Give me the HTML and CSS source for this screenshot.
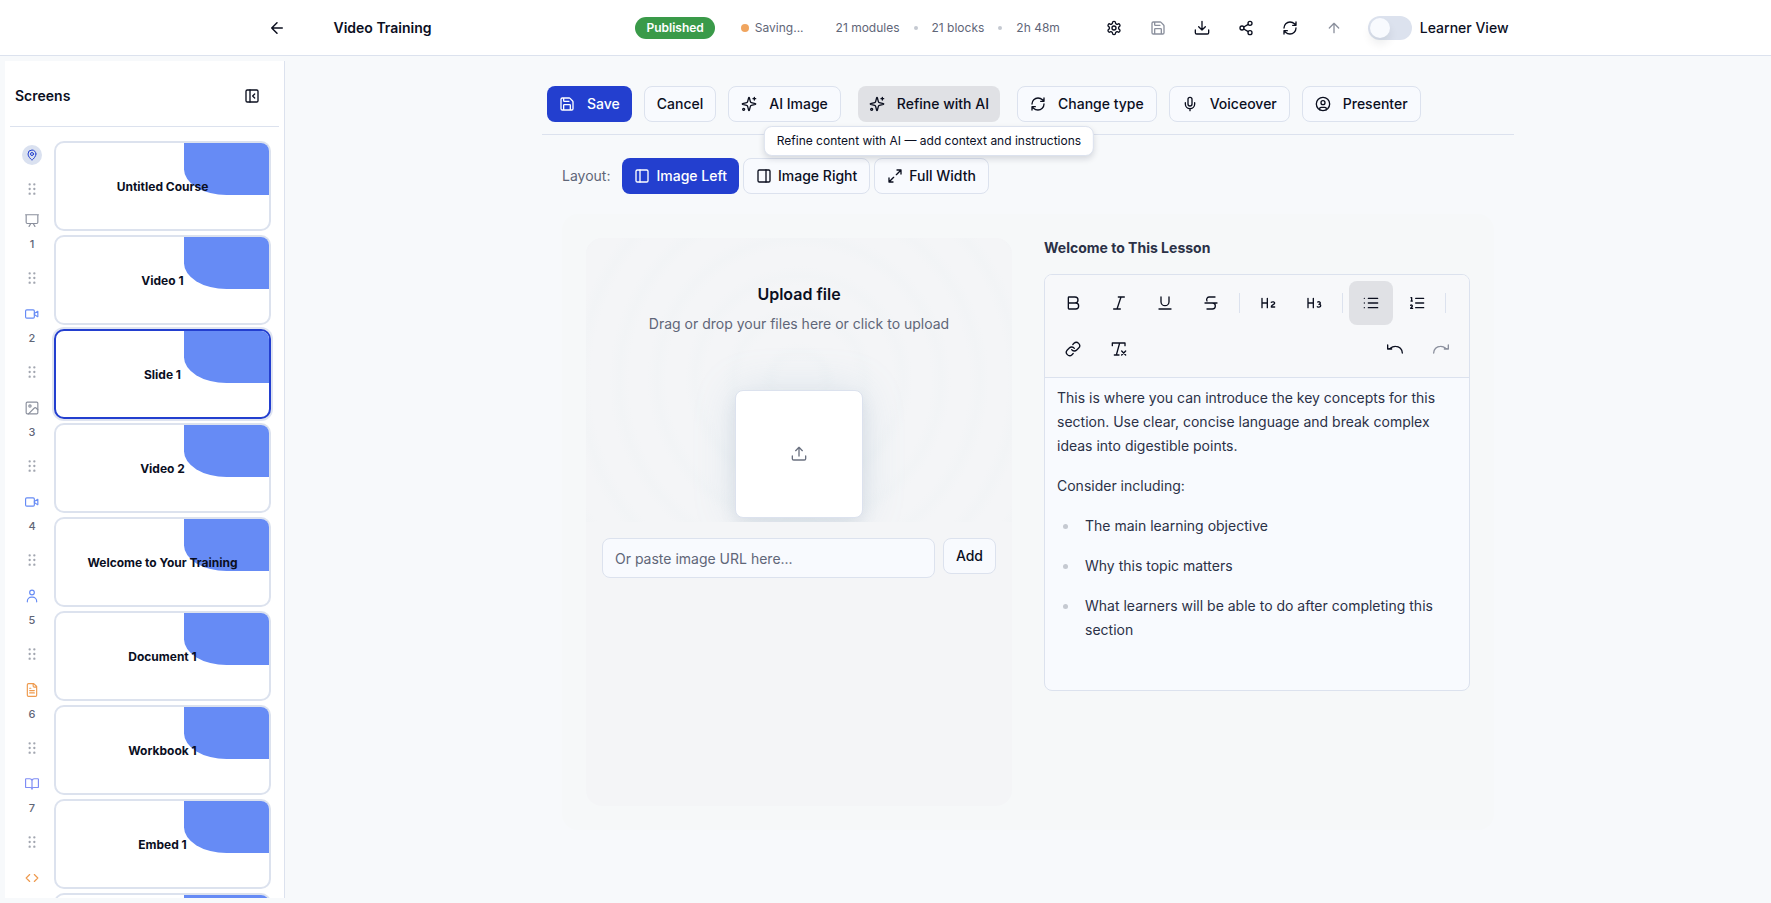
FILE: index.html
```html
<!DOCTYPE html>
<html lang="en">
<head>
<meta charset="utf-8">
<meta name="viewport" content="width=device-width, initial-scale=1">
<title>Video Training</title>
<link rel="stylesheet" href="styles.css">
</head>
<body>
<svg class="sprite" aria-hidden="true">
  <symbol id="i-back" viewBox="0 0 24 24"><path d="m12 19-7-7 7-7M19 12H5"/></symbol>
  <symbol id="i-gear" viewBox="0 0 24 24"><path d="M12.22 2h-.44a2 2 0 0 0-2 2v.18a2 2 0 0 1-1 1.73l-.43.25a2 2 0 0 1-2 0l-.15-.08a2 2 0 0 0-2.73.73l-.22.38a2 2 0 0 0 .73 2.73l.15.1a2 2 0 0 1 1 1.72v.51a2 2 0 0 1-1 1.74l-.15.09a2 2 0 0 0-.73 2.73l.22.38a2 2 0 0 0 2.73.73l.15-.08a2 2 0 0 1 2 0l.43.25a2 2 0 0 1 1 1.73V20a2 2 0 0 0 2 2h.44a2 2 0 0 0 2-2v-.18a2 2 0 0 1 1-1.73l.43-.25a2 2 0 0 1 2 0l.15.08a2 2 0 0 0 2.73-.73l.22-.39a2 2 0 0 0-.73-2.73l-.15-.08a2 2 0 0 1-1-1.74v-.5a2 2 0 0 1 1-1.74l.15-.09a2 2 0 0 0 .73-2.73l-.22-.38a2 2 0 0 0-2.73-.73l-.15.08a2 2 0 0 1-2 0l-.43-.25a2 2 0 0 1-1-1.73V4a2 2 0 0 0-2-2z"/><circle cx="12" cy="12" r="3"/></symbol>
  <symbol id="i-save" viewBox="0 0 24 24"><path d="M15.2 3a2 2 0 0 1 1.4.6l3.8 3.8a2 2 0 0 1 .6 1.4V19a2 2 0 0 1-2 2H5a2 2 0 0 1-2-2V5a2 2 0 0 1 2-2zM17 21v-7a1 1 0 0 0-1-1H8a1 1 0 0 0-1 1v7M7 3v4a1 1 0 0 0 1 1h7"/></symbol>
  <symbol id="i-download" viewBox="0 0 24 24"><path d="M22 15v4a2 2 0 0 1-2 2H4a2 2 0 0 1-2-2v-4M7 10l5 5 5-5M12 15V2"/></symbol>
  <symbol id="i-upload" viewBox="0 0 24 24"><path d="M22 15v4a2 2 0 0 1-2 2H4a2 2 0 0 1-2-2v-4M17 7l-5-5-5 5M12 2v13"/></symbol>
  <symbol id="i-share" viewBox="0 0 24 24"><circle cx="18" cy="5" r="3"/><circle cx="6" cy="12" r="3"/><circle cx="18" cy="19" r="3"/><path d="m8.59 13.51 6.83 3.98M15.41 6.51l-6.82 3.98"/></symbol>
  <symbol id="i-refresh" viewBox="0 0 24 24"><path d="M3 12a9 9 0 0 1 9-9 9.75 9.75 0 0 1 6.74 2.74L21 8M21 3v5h-5M21 12a9 9 0 0 1-9 9 9.75 9.75 0 0 1-6.74-2.74L3 16M8 16H3v5"/></symbol>
  <symbol id="i-up" viewBox="0 0 24 24"><path d="m5 12 7-7 7 7M12 19V5"/></symbol>
  <symbol id="i-collapse" viewBox="0 0 24 24"><rect x="3" y="3" width="18" height="18" rx="2"/><path d="M9 3v18M16 15l-3-3 3-3"/></symbol>
  <symbol id="i-left" viewBox="0 0 24 24"><rect x="3" y="3" width="18" height="18" rx="2"/><path d="M9 3v18"/></symbol>
  <symbol id="i-right" viewBox="0 0 24 24"><rect x="3" y="3" width="18" height="18" rx="2"/><path d="M15 3v18"/></symbol>
  <symbol id="i-expand" viewBox="0 0 24 24"><path d="M15 3h6v6M21 3l-7 7M3 21l7-7M9 21H3v-6"/></symbol>
  <symbol id="i-sparkle" viewBox="0 0 24 24"><path d="M9.94 15.5A2 2 0 0 0 8.5 14.06l-6.14-1.58a.5.5 0 0 1 0-.96L8.5 9.94A2 2 0 0 0 9.94 8.5l1.58-6.14a.5.5 0 0 1 .96 0l1.58 6.14a2 2 0 0 0 1.44 1.44l6.14 1.58a.5.5 0 0 1 0 .96l-6.14 1.58a2 2 0 0 0-1.44 1.44l-1.58 6.14a.5.5 0 0 1-.96 0zM20 2v4M22 4h-4"/><circle cx="4" cy="20" r="1.5"/></symbol>
  <symbol id="i-mic" viewBox="0 0 24 24"><path d="M12 19v3M19 10v2a7 7 0 0 1-14 0v-2"/><rect x="9" y="2" width="6" height="13" rx="3"/></symbol>
  <symbol id="i-person" viewBox="0 0 24 24"><circle cx="12" cy="12" r="10"/><circle cx="12" cy="10" r="3"/><path d="M7 20.66V19a2 2 0 0 1 2-2h6a2 2 0 0 1 2 2v1.66"/></symbol>
  <symbol id="i-pin" viewBox="0 0 24 24"><path d="M20 10c0 5-5.54 10.19-7.4 11.8a1 1 0 0 1-1.2 0C9.54 20.19 4 15 4 10a8 8 0 0 1 16 0"/><circle cx="12" cy="10" r="3"/></symbol>
  <symbol id="i-grip" viewBox="0 0 24 24"><circle cx="8" cy="4" r="1"/><circle cx="8" cy="12" r="1"/><circle cx="8" cy="20" r="1"/><circle cx="16" cy="4" r="1"/><circle cx="16" cy="12" r="1"/><circle cx="16" cy="20" r="1"/></symbol>
  <symbol id="i-board" viewBox="0 0 24 24"><path d="M1 3h22M2 3v13a2 2 0 0 0 2 2h16a2 2 0 0 0 2-2V3M7 23l3-5M17 23l-3-5"/></symbol>
  <symbol id="i-video" viewBox="0 0 24 24"><rect x="1" y="5" width="15" height="14" rx="2"/><path d="m16 11 5.200-3.500a.5.500 0 0 1 .8.400v8.200a.5.500 0 0 1-.8.400L16 13"/></symbol>
  <symbol id="i-image" viewBox="0 0 24 24"><rect x="2" y="2" width="20" height="20" rx="2"/><circle cx="8.500" cy="8.500" r="2"/><path d="m22 15-3-3a2 2 0 0 0-3 0l-10 10"/></symbol>
  <symbol id="i-user" viewBox="0 0 24 24"><path d="M20 22v-1a7 7 0 0 0-7-7h-2a7 7 0 0 0-7 7v1"/><circle cx="12" cy="6" r="4"/></symbol>
  <symbol id="i-doc" viewBox="0 0 24 24"><path d="M15 1H6a2 2 0 0 0-2 2v18a2 2 0 0 0 2 2h12a2 2 0 0 0 2-2V6zM14 1v4a2 2 0 0 0 2 2h4M10 9H8M16 13H8M16 17H8"/></symbol>
  <symbol id="i-book" viewBox="0 0 24 24"><path d="M12 7v14M2 18a1 1 0 0 1-1-1V4a1 1 0 0 1 1-1h6a4 4 0 0 1 4 4 4 4 0 0 1 4-4h6a1 1 0 0 1 1 1v13a1 1 0 0 1-1 1h-7a3 3 0 0 0-3 3 3 3 0 0 0-3-3z"/></symbol>
  <symbol id="i-code" viewBox="0 0 24 24"><path d="m16 18 6-6-6-6M8 6l-6 6 6 6"/></symbol>
  <symbol id="i-bold" viewBox="0 0 24 24"><path d="M5 12h11a4 4 0 0 1 0 9H6a1 1 0 0 1-1-1V4a1 1 0 0 1 1-1h9a4 4 0 0 1 0 9"/></symbol>
  <symbol id="i-italic" viewBox="0 0 24 24"><path d="M20 3h-9M14 21H4M15 3 9 21"/></symbol>
  <symbol id="i-underline" viewBox="0 0 24 24"><path d="M6 3v7a6 6 0 0 0 12 0V3M3 21h18"/></symbol>
  <symbol id="i-strike" viewBox="0 0 24 24"><path d="M18 3H9a4 4 0 0 0-3 6M14 12a4 4 0 0 1 0 9H6M3 12h18"/></symbol>
  <symbol id="i-h2" viewBox="0 0 24 24"><path d="M3 12h8M3 19V5M11 19V5M22 18h-5c0-4 5-3 5-6 0-1.500-3-2.500-5-1"/></symbol>
  <symbol id="i-h3" viewBox="0 0 24 24"><path d="M3 12h8M3 19V5M11 19V5M17.500 10.500c1.700-1 4 0 4 1.500a2 2 0 0 1-2 2M17 17.500c2 1.500 5 .3 5-1.500a2 2 0 0 0-2.500-2"/></symbol>
  <symbol id="i-list" viewBox="0 0 24 24"><path d="M2 5h.01M2 12h.01M2 19h.01M8 5h14M8 12h14M8 19h14"/></symbol>
  <symbol id="i-ordered" viewBox="0 0 24 24"><path d="M10 5h12M10 12h12M10 19h12M3 4h1v5M3 9h2M5.500 20H2.400c0-1 2.600-1.925 2.600-3.500a1.500 1.500 0 0 0-2.600-1.020"/></symbol>
  <symbol id="i-link" viewBox="0 0 24 24"><path d="M10 13a5 5 0 0 0 7.540.540l3-3a5 5 0 0 0-7.070-7.070l-1.720 1.710M14 11a5 5 0 0 0-7.540-.540l-3 3a5 5 0 0 0 7.070 7.070l1.710-1.710"/></symbol>
  <symbol id="i-clear" viewBox="0 0 24 24"><path d="M2 7V3h19v4M5 21h7M13 3 8 21M16 15l6 6M22 15l-6 6"/></symbol>
  <symbol id="i-undo" viewBox="0 0 24 24"><path d="M1 6v6h6M23 18a10 10 0 0 0-10-10 11 11 0 0 0-8 3l-3 1"/></symbol>
  <symbol id="i-redo" viewBox="0 0 24 24"><path d="M23 6v6h-6M1 18A10 10 0 0 1 11 8a11 11 0 0 1 8 3l3 1"/></symbol>
</svg>

<header class="topbar">
  <div class="topbar-inner">
    <button class="icon-btn back" aria-label="Back"><svg class="icon icon-lg"><use href="#i-back"/></svg></button>
    <h1 class="course-title">Video Training</h1>
    <span class="badge">Published</span>
    <span class="saving">Saving...</span>
    <div class="stats"><span>21 modules</span><span class="dot"></span><span>21 blocks</span><span class="dot"></span><span>2h 48m</span></div>
    <nav class="actions" aria-label="Course actions">
      <button class="icon-btn" aria-label="Settings"><svg class="icon"><use href="#i-gear"/></svg></button>
      <button class="icon-btn" aria-label="Save" disabled><svg class="icon"><use href="#i-save"/></svg></button>
      <button class="icon-btn" aria-label="Download"><svg class="icon"><use href="#i-download"/></svg></button>
      <button class="icon-btn" aria-label="Share"><svg class="icon"><use href="#i-share"/></svg></button>
      <button class="icon-btn" aria-label="Refresh"><svg class="icon"><use href="#i-refresh"/></svg></button>
      <button class="icon-btn" aria-label="Scroll to top" disabled><svg class="icon"><use href="#i-up"/></svg></button>
    </nav>
    <label class="learner"><input class="switch" type="checkbox" role="switch">Learner View</label>
  </div>
</header>

<div class="workspace">
  <aside class="sidebar">
    <div class="sidebar-head">
      <h2 class="sidebar-title">Screens</h2>
      <button class="icon-btn" aria-label="Collapse sidebar"><svg class="icon"><use href="#i-collapse"/></svg></button>
    </div>
    <ol class="screens">
      <li class="screen"><div class="rail"><span class="pin"><svg class="icon icon-xs"><use href="#i-pin"/></svg></span><svg class="icon icon-sm grip"><use href="#i-grip"/></svg><svg class="icon icon-sm"><use href="#i-board"/></svg></div><button class="thumb">Untitled Course</button></li>
      <li class="screen"><div class="rail"><span class="num">1</span><svg class="icon icon-sm grip"><use href="#i-grip"/></svg><svg class="icon icon-sm blue"><use href="#i-video"/></svg></div><button class="thumb">Video 1</button></li>
      <li class="screen"><div class="rail"><span class="num">2</span><svg class="icon icon-sm grip"><use href="#i-grip"/></svg><svg class="icon icon-sm"><use href="#i-image"/></svg></div><button class="thumb selected" aria-current="true">Slide 1</button></li>
      <li class="screen"><div class="rail"><span class="num">3</span><svg class="icon icon-sm grip"><use href="#i-grip"/></svg><svg class="icon icon-sm blue"><use href="#i-video"/></svg></div><button class="thumb">Video 2</button></li>
      <li class="screen"><div class="rail"><span class="num">4</span><svg class="icon icon-sm grip"><use href="#i-grip"/></svg><svg class="icon icon-sm blue"><use href="#i-user"/></svg></div><button class="thumb">Welcome to Your Training</button></li>
      <li class="screen"><div class="rail"><span class="num">5</span><svg class="icon icon-sm grip"><use href="#i-grip"/></svg><svg class="icon icon-sm orange"><use href="#i-doc"/></svg></div><button class="thumb">Document 1</button></li>
      <li class="screen"><div class="rail"><span class="num">6</span><svg class="icon icon-sm grip"><use href="#i-grip"/></svg><svg class="icon icon-sm violet"><use href="#i-book"/></svg></div><button class="thumb">Workbook 1</button></li>
      <li class="screen"><div class="rail"><span class="num">7</span><svg class="icon icon-sm grip"><use href="#i-grip"/></svg><svg class="icon icon-sm orange"><use href="#i-code"/></svg></div><button class="thumb">Embed 1</button></li>
      <li class="screen"><div class="rail"></div><button class="thumb" aria-label="Next screen"></button></li>
    </ol>
  </aside>

  <main class="main">
    <div class="editor">
      <div class="toolbar">
        <button class="btn primary wide"><svg class="icon"><use href="#i-save"/></svg>Save</button>
        <button class="btn wide">Cancel</button>
        <button class="btn wide"><svg class="icon"><use href="#i-sparkle"/></svg>AI Image</button>
        <div class="tip-anchor">
          <button class="btn wide hovered" aria-describedby="refine-tip"><svg class="icon"><use href="#i-sparkle"/></svg>Refine with AI</button>
          <div class="tooltip" role="tooltip" id="refine-tip">Refine content with AI — add context and instructions</div>
        </div>
        <button class="btn wide"><svg class="icon"><use href="#i-refresh"/></svg>Change type</button>
        <button class="btn wide"><svg class="icon"><use href="#i-mic"/></svg>Voiceover</button>
        <button class="btn wide"><svg class="icon"><use href="#i-person"/></svg>Presenter</button>
      </div>

      <div class="body">
        <div class="layout-row">
          <span class="layout-label">Layout:</span>
          <button class="btn primary" aria-pressed="true"><svg class="icon"><use href="#i-left"/></svg>Image Left</button>
          <button class="btn"><svg class="icon"><use href="#i-right"/></svg>Image Right</button>
          <button class="btn"><svg class="icon"><use href="#i-expand"/></svg>Full Width</button>
        </div>

        <div class="slide">
          <section class="media">
            <div class="drop">
              <h3 class="drop-title">Upload file</h3>
              <p class="drop-text">Drag or drop your files here or click to upload</p>
              <button class="drop-box" aria-label="Upload file"><svg class="icon"><use href="#i-upload"/></svg></button>
            </div>
            <form class="url-row">
              <input class="url-input" type="text" aria-label="Image URL" placeholder="Or paste image URL here...">
              <button class="btn wide" type="button">Add</button>
            </form>
          </section>

          <section class="copy">
            <h3 class="copy-title">Welcome to This Lesson</h3>
            <div class="rich">
              <div class="rich-bar" role="toolbar" aria-label="Formatting">
                <button class="tool" aria-label="Bold"><svg class="icon"><use href="#i-bold"/></svg></button>
                <button class="tool" aria-label="Italic"><svg class="icon"><use href="#i-italic"/></svg></button>
                <button class="tool" aria-label="Underline"><svg class="icon"><use href="#i-underline"/></svg></button>
                <button class="tool" aria-label="Strikethrough"><svg class="icon"><use href="#i-strike"/></svg></button>
                <span class="sep"></span>
                <button class="tool" aria-label="Heading 2"><svg class="icon"><use href="#i-h2"/></svg></button>
                <button class="tool" aria-label="Heading 3"><svg class="icon"><use href="#i-h3"/></svg></button>
                <span class="sep"></span>
                <button class="tool active" aria-label="Bulleted list" aria-pressed="true"><svg class="icon"><use href="#i-list"/></svg></button>
                <button class="tool" aria-label="Numbered list"><svg class="icon"><use href="#i-ordered"/></svg></button>
                <span class="sep"></span>
                <button class="tool" aria-label="Link"><svg class="icon"><use href="#i-link"/></svg></button>
                <button class="tool" aria-label="Clear formatting"><svg class="icon"><use href="#i-clear"/></svg></button>
                <span class="spacer"></span>
                <button class="tool" aria-label="Undo"><svg class="icon"><use href="#i-undo"/></svg></button>
                <button class="tool" aria-label="Redo" disabled><svg class="icon"><use href="#i-redo"/></svg></button>
              </div>
              <div class="rich-text" contenteditable="true" role="textbox" aria-multiline="true" aria-label="Slide text">
                <p>This is where you can introduce the key concepts for this section. Use clear, concise language and break complex ideas into digestible points.</p>
                <p>Consider including:</p>
                <ul>
                  <li>The main learning objective</li>
                  <li>Why this topic matters</li>
                  <li>What learners will be able to do after completing this section</li>
                </ul>
              </div>
            </div>
          </section>
        </div>
      </div>
    </div>
  </main>
</div>
</body>
</html>
```
FILE: styles.css
```css
:root {
  --ink: #0b0f1f;
  --body: #2b3147;
  --muted: #5f6678;
  --line: #dce2ee;
  --page: #f7f9fb;
  --field: #f8fafe;
  --primary: #233fcf;
  --blob: #668bf5;
}

* { box-sizing: border-box; }

body {
  margin: 0;
  height: 100vh;
  display: flex;
  flex-direction: column;
  overflow: hidden;
  background: var(--page);
  color: var(--ink);
  font-family: Inter, "Liberation Sans", sans-serif;
  font-size: 14px;
  line-height: 20px;
}

h1, h2, h3, p, ul, ol { margin: 0; padding: 0; }

button, input { font: inherit; color: inherit; }

.sprite { display: none; }

.icon {
  width: 16px;
  height: 16px;
  flex: none;
  fill: none;
  stroke: currentColor;
  stroke-width: 2;
  stroke-linecap: round;
  stroke-linejoin: round;
}
.icon-lg { width: 18px; height: 18px; }
.icon-sm { width: 14px; height: 14px; }
.icon-xs { width: 12px; height: 12px; }

.icon-btn {
  width: 32px;
  height: 32px;
  padding: 0;
  display: grid;
  place-items: center;
  border: 0;
  background: none;
}
.icon-btn:disabled, .tool:disabled { color: #8b909d; }

/* Top bar */
.topbar {
  flex: none;
  background: #fff;
  border-bottom: 1px solid var(--line);
}
.topbar-inner {
  max-width: 1280px;
  height: 55px;
  margin: 0 auto;
  padding: 0 17px 0 15px;
  display: flex;
  align-items: center;
}
.course-title {
  flex: 1;
  margin-left: 41px;
  font-size: 14px;
  font-weight: 600;
}
.badge {
  padding: 0 11px;
  border-radius: 11px;
  background: #3a9a49;
  color: #fff;
  font-size: 12px;
  font-weight: 600;
  line-height: 22px;
}
.saving {
  margin-left: 26px;
  display: flex;
  align-items: center;
  gap: 6px;
  color: var(--muted);
  font-size: 12px;
}
.saving::before {
  content: "";
  width: 8px;
  height: 8px;
  border-radius: 50%;
  background: #f0a55f;
}
.stats {
  margin: 0 38px 0 32px;
  display: flex;
  align-items: center;
  gap: 14px;
  color: var(--muted);
  font-size: 12px;
}
.dot {
  width: 4px;
  height: 4px;
  border-radius: 50%;
  background: #c5c9d1;
}
.actions { display: flex; gap: 12px; }
.learner {
  margin-left: 18px;
  display: flex;
  align-items: center;
  gap: 8px;
  font-weight: 500;
}
.switch {
  appearance: none;
  width: 44px;
  height: 24px;
  margin: 0;
  padding: 2px;
  border-radius: 12px;
  background: var(--line);
}
.switch::before {
  content: "";
  display: block;
  width: 20px;
  height: 20px;
  border-radius: 50%;
  background: var(--field);
  box-shadow: 0 6px 10px rgba(15, 23, 42, 0.08);
}
.switch:checked::before { margin-left: auto; }

/* Sidebar */
.workspace {
  flex: 1;
  min-height: 0;
  display: flex;
}
.sidebar {
  flex: none;
  width: 280px;
  margin: 5px 0 5px 5px;
  padding: 5px 5px 0;
  display: flex;
  flex-direction: column;
  background: #fff;
  border-right: 1px solid var(--line);
}
.sidebar-head {
  flex: none;
  padding: 14px 11px 14px 5px;
  display: flex;
  align-items: center;
  justify-content: space-between;
  border-bottom: 1px solid var(--line);
}
.sidebar-title { font-size: 14px; font-weight: 600; }
.screens {
  flex: 1;
  min-height: 0;
  padding: 14px 8px 0 0;
  overflow: auto;
  scrollbar-width: none;
  list-style: none;
}
.screen {
  height: 90px;
  margin-bottom: 4px;
  display: flex;
}
.rail {
  flex: none;
  width: 44px;
  padding: 4px 0;
  display: flex;
  flex-direction: column;
  align-items: center;
  justify-content: space-between;
  color: #8b909d;
}
.num {
  color: var(--muted);
  font-size: 11px;
  font-weight: 500;
  line-height: 10px;
}
.pin {
  width: 20px;
  height: 20px;
  display: grid;
  place-items: center;
  border-radius: 50%;
  background: #dae1f0;
  color: var(--primary);
}
.grip { color: #a2a6b0; }
.blue { color: #668bf5; }
.violet { color: #7f8df5; }
.orange { color: #ee9a4e; }
.thumb {
  position: relative;
  isolation: isolate;
  flex: 1;
  min-width: 0;
  padding: 2px 0 0;
  border: 2px solid var(--line);
  border-radius: 10px;
  background: #fff;
  overflow: hidden;
  font-size: 12px;
  font-weight: 700;
}
.thumb::before {
  content: "";
  position: absolute;
  z-index: -1;
  top: 0;
  right: 0;
  width: 40%;
  height: 60%;
  border-bottom-left-radius: 50%;
  background: var(--blob);
}
.thumb.selected {
  border-color: var(--primary);
  box-shadow: 0 0 0 2px #dfe4f1;
}

/* Editor */
.main {
  flex: 1;
  min-width: 0;
  padding: 30px 20px 0;
  overflow: auto;
}
.editor { max-width: 972px; margin: 0 auto; }
.toolbar {
  padding: 0 5px 12px;
  display: flex;
  align-items: center;
  gap: 12px;
  border-bottom: 1px solid var(--line);
}
.btn {
  height: 36px;
  padding: 0 12px;
  display: inline-flex;
  align-items: center;
  gap: 6px;
  border: 1px solid var(--line);
  border-radius: 8px;
  background: var(--field);
  font-weight: 500;
  white-space: nowrap;
}
.btn.wide { gap: 12px; }
.btn.primary {
  border: 0;
  background: var(--primary);
  color: #fff;
}
.btn.hovered {
  padding: 0 11px;
  border: 0;
  background: #e0e1e5;
}
.tip-anchor { position: relative; margin: 0 5px; }
.tooltip {
  position: absolute;
  z-index: 2;
  top: 40px;
  left: 50%;
  transform: translateX(-50%);
  padding: 4px 12px;
  border: 1px solid var(--line);
  border-radius: 8px;
  background: #fff;
  box-shadow: 0 3px 6px rgba(15, 23, 42, 0.14);
  font-size: 12px;
  white-space: nowrap;
}

.body { padding: 23px 20px; }
.layout-row {
  margin-bottom: 20px;
  display: flex;
  align-items: center;
  gap: 4px;
}
.layout-label { margin-right: 8px; color: var(--muted); }

.slide {
  padding: 24px;
  display: grid;
  grid-template-columns: 1fr 1fr;
  gap: 32px;
  border-radius: 16px;
  background: #f6f8f9;
}
.media {
  min-height: 568px;
  border-radius: 16px;
  background: #f4f5f7;
  overflow: hidden;
}
.drop {
  padding: 44px 16px 4px;
  display: flex;
  flex-direction: column;
  align-items: center;
  overflow: hidden;
  background: repeating-radial-gradient(circle at 50% 142px, #f4f5f7 0 18px, #f2f4f6 28px, #f4f5f7 38px);
  text-align: center;
}
.drop-title { font-size: 16px; font-weight: 600; line-height: 24px; }
.drop-text { margin-top: 8px; color: var(--muted); }
.drop-box {
  width: 128px;
  height: 128px;
  margin-top: 56px;
  padding: 0;
  display: grid;
  place-items: center;
  border: 1px solid var(--line);
  border-radius: 8px;
  background: #fff;
  color: #6b7180;
  box-shadow: 0 8px 16px rgba(90, 110, 140, 0.1), 0 0 44px rgba(120, 160, 190, 0.2);
}
.url-row {
  padding: 16px;
  display: flex;
  align-items: flex-start;
  gap: 8px;
}
.url-input {
  flex: 1;
  min-width: 0;
  height: 40px;
  padding: 0 12px;
  border: 1px solid var(--line);
  border-radius: 8px;
  background: var(--field);
}
.url-input::placeholder { color: var(--muted); opacity: 1; }

.copy-title {
  margin-bottom: 16px;
  color: var(--body);
  font-size: 14px;
  font-weight: 700;
}
.rich {
  border: 1px solid var(--line);
  border-radius: 8px;
  background: var(--field);
  overflow: hidden;
}
.rich-bar {
  padding: 6px;
  display: flex;
  flex-wrap: wrap;
  align-items: center;
  gap: 2px;
  border-bottom: 1px solid var(--line);
  background: #f7f8fa;
}
.tool {
  width: 44px;
  height: 44px;
  padding: 0;
  display: grid;
  place-items: center;
  border: 0;
  border-radius: 8px;
  background: none;
}
.tool.active { background: #e0e1e5; }
.sep {
  width: 1px;
  height: 20px;
  margin: 0 4px;
  background: var(--line);
}
.spacer { flex: 1; }
.rich-text {
  min-height: 312px;
  padding: 8px 12px;
  color: var(--body);
  line-height: 24px;
  outline: none;
}
.rich-text p { margin-bottom: 16px; }
.rich-text ul { list-style: none; }
.rich-text li {
  margin-bottom: 16px;
  padding-left: 6px;
  display: flex;
  gap: 17px;
}
.rich-text li::before {
  content: "";
  flex: none;
  width: 5px;
  height: 5px;
  margin-top: 10px;
  border-radius: 50%;
  background: #c5c9d1;
}
```
